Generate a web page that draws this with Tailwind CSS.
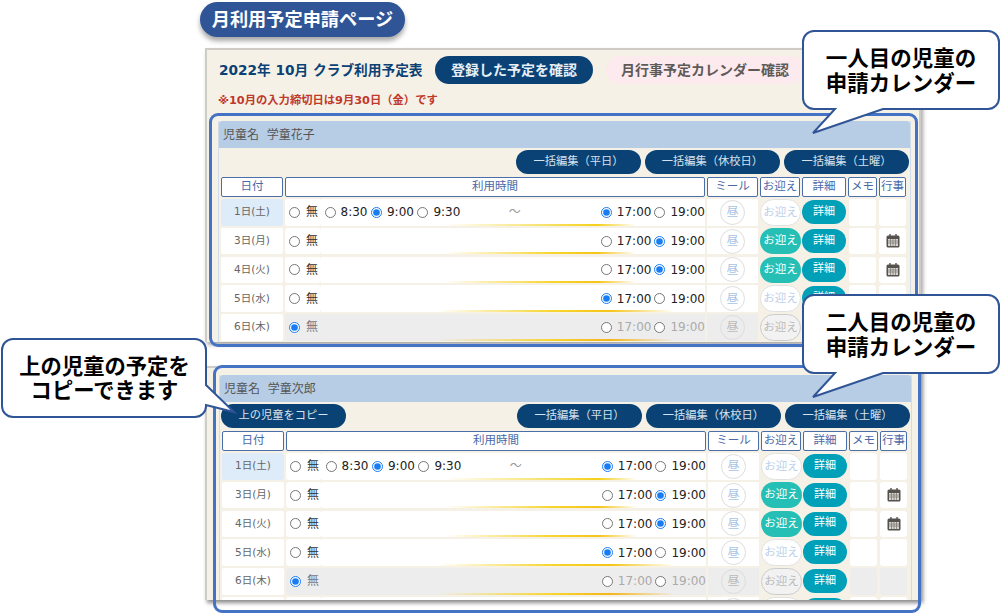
<!DOCTYPE html>
<html lang="ja">
<head>
  <meta charset="UTF-8" />
  <meta name="viewport" content="width=device-width, initial-scale=1.0" />
  <title>月利用予定申請ページ</title>
  <script src="https://cdn.jsdelivr.net/npm/@tailwindcss/browser@4"></script>
</head>

<body class="bg-white">
  <div class="relative w-[1000px] h-[614px] overflow-hidden bg-white pl-[205px] pt-[2px] font-['DejaVu_Sans','Noto_Sans_CJK_JP',sans-serif] text-[#333]">

    <!-- Page title -->
    <h1 class="-ml-[5px] w-[205px] h-[35px] rounded-full bg-[#2f5597] shadow-[0_4px_5px_rgba(0,0,0,0.35)] flex items-center justify-center text-[18.2px] font-bold text-white">月利用予定申請ページ</h1>

    <!-- First screen -->
    <section class="mt-[11px] w-[716px] h-[294px] overflow-hidden border-x-2 border-t-2 border-[#cfccc6] bg-[#f6f1e6] shadow-[2px_3px_4px_rgba(0,0,0,0.35)]">
      <div class="flex items-center h-[28px] mt-[6px] pl-[12px]">
        <h2 class="w-[216px] text-[13.7px] font-bold text-[#0a4275] whitespace-nowrap">2022年 10月 クラブ利用予定表</h2>
        <button class="w-[158px] h-[28px] rounded-full bg-[#0a4275] text-[14px] font-bold text-[#e6eef6]">登録した予定を確認</button>
        <button class="ml-[13px] w-[198px] h-[28px] rounded-full bg-[#fdeaee] text-[14px] font-bold text-[#5f5a58]">月行事予定カレンダー確認</button>
      </div>
      <p class="mt-[9px] pl-[11px] h-[15px] leading-[15px] text-[11.3px] font-bold text-[#c0392b] whitespace-nowrap">※10月の入力締切日は9月30日（金）です</p>
      <div class="mt-[13px] ml-[11px]" data-panel="学童花子" data-rows="5"></div>
    </section>

    <!-- Second screen -->
    <section class="mt-[24px] w-[716px] h-[234px] overflow-hidden border-x-2 border-t-2 border-[#cfccc6] bg-[#f6f1e6] shadow-[2px_3px_4px_rgba(0,0,0,0.45)]">
      <div class="mt-[7px] ml-[12px]" data-panel="学童次郎" data-rows="6" data-copy="1"></div>
    </section>

    <!-- Annotation outlines -->
    <div class="absolute left-[209px] top-[113px] w-[709px] h-[234px] rounded-[9px] border-[3px] border-[#4472c4] pointer-events-none"></div>
    <div class="absolute left-[213px] top-[365px] w-[708px] h-[248px] rounded-[9px] border-[3px] border-[#4472c4] pointer-events-none"></div>

    <!-- Callouts -->
    <div class="absolute left-[802px] top-[30px] w-[198px] h-[80px] pt-[2px] flex items-center justify-center text-center">
      <svg class="absolute inset-0 overflow-visible" width="198" height="80" fill="#fff" stroke="#2f5597" stroke-width="2">
        <path d="M12 1H186a11 11 0 0 1 11 11V68a11 11 0 0 1-11 11H81L11 103L33 79H12a11 11 0 0 1-11-11V12a11 11 0 0 1 11-11z" />
      </svg>
      <p class="relative text-[21.5px] leading-[25px] font-bold text-black">一人目の児童の<br />申請カレンダー</p>
    </div>
    <div class="absolute left-[802px] top-[294px] w-[198px] h-[80px] pt-[2px] flex items-center justify-center text-center">
      <svg class="absolute inset-0 overflow-visible" width="198" height="80" fill="#fff" stroke="#2f5597" stroke-width="2">
        <path d="M12 1H186a11 11 0 0 1 11 11V68a11 11 0 0 1-11 11H81L11 103L33 79H12a11 11 0 0 1-11-11V12a11 11 0 0 1 11-11z" />
      </svg>
      <p class="relative text-[21.5px] leading-[25px] font-bold text-black">二人目の児童の<br />申請カレンダー</p>
    </div>
    <div class="absolute left-[1px] top-[338px] w-[207px] h-[81px] flex items-center justify-center text-center">
      <svg class="absolute inset-0 overflow-visible" width="207" height="81" fill="#fff" stroke="#2f5597" stroke-width="2">
        <path d="M12 1H194a11 11 0 0 1 11 11V47L233 74L205 67V68a11 11 0 0 1-11 11H12a11 11 0 0 1-11-11V12a11 11 0 0 1 11-11z" />
      </svg>
      <p class="relative text-[21.3px] leading-[24px] font-bold text-black">上の児童の予定を<br />コピーできます</p>
    </div>
  </div>

  <script>
    const gridCols = "grid grid-cols-[64px_36px_386px_53px_42px_46px_31px_29px]";

    const days = [
      { label: "1日(土)", start: "9:00", end: "17:00", today: true },
      { label: "3日(月)", end: "19:00", pickup: true, event: true, glow: "bg-[linear-gradient(90deg,transparent_32%,#f7d530_60%,#f5c518_72%,transparent_82%)]" },
      { label: "4日(火)", end: "19:00", pickup: true, event: true, glow: "bg-[linear-gradient(90deg,transparent_32%,#f7d530_60%,#f5c518_72%,transparent_82%)]" },
      { label: "5日(水)", end: "17:00", glow: "bg-[linear-gradient(90deg,transparent_30%,#f7d530_60%,#f5c518_75%,transparent_92%)]" },
      { label: "6日(木)", off: true, glow: "bg-[linear-gradient(90deg,transparent_30%,#f7d530_60%,#f5b518_75%,transparent_92%)]" },
      { label: "7日(金)", end: "17:00" },
    ];

    const calendarIcon = `
      <svg width="14" height="14" viewBox="0 0 14 14">
        <rect x="0.5" y="1.5" width="13" height="12" rx="1.5" fill="#55524e" />
        <rect x="2" y="5" width="10" height="7" fill="#d8d5cf" />
        <path d="M2 7h10M2 9h10M4.5 5v7M7 5v7M9.5 5v7" stroke="#77736d" stroke-width="0.7" />
        <path d="M4 0v3M10 0v3" stroke="#55524e" stroke-width="1.4" />
      </svg>`;

    function radio(name, checked) {
      return `<input type="radio" name="${name}" ${checked ? "checked" : ""} class="w-[11px] h-[11px] m-0 shrink-0 accent-[#1a7cf2]" />`;
    }

    function timeOption(name, value, current) {
      return `<label class="flex items-center gap-[5px]">${radio(name, value === current)}<span>${value}</span></label>`;
    }

    function row(panel, day, i) {
      const name = `${panel}-${i}`;
      const cell = day.off ? "bg-[#ededed]" : "bg-white";
      const startTimes = day.start
        ? `<div class="flex items-center gap-[3.5px]">${["8:30", "9:00", "9:30"].map(t => timeOption(name + "-s", t, day.start)).join("")}<span class="ml-[45px] text-[#999]">～</span></div>`
        : "<div></div>";
      return `
        <div class="${gridCols} h-[28.75px] text-[11px]">
          <div class="mr-[2px] h-[26.5px] rounded-[2px] flex items-center justify-center text-[10.5px] text-[#666] ${day.today ? "bg-[#deecf9]" : "bg-white"}">${day.label}</div>
          <label class="h-[26.5px] rounded-[3px] flex items-center pl-[4px] gap-[6px] text-[12px] ${cell} ${day.off ? "text-[#778]" : ""}">${radio(name + "-n", day.off)}<span>無</span></label>
          <div class="mr-[2px] h-[26.5px] flex items-center justify-between pl-[3.5px] text-[12px] ${day.off ? "text-[#aaa]" : "text-[#222]"} ${cell} ${day.glow || "bg-[linear-gradient(90deg,transparent_32%,#f7e060_60%,#f5d018_72%,transparent_82%)]"} bg-no-repeat bg-bottom bg-[length:100%_2px]">
            ${startTimes}
            <div class="flex items-center gap-[3px]">${["17:00", "19:00"].map(t => timeOption(name + "-e", t, day.end)).join("")}</div>
          </div>
          <div class="mr-[2px] h-[26.5px] flex items-center justify-center ${cell}">
            <span class="w-[25px] h-[25px] rounded-full border border-[#ddd] flex items-center justify-center text-[12px] ${day.off ? "text-[#bbb]" : "text-[#a9c4e4]"}">昼</span>
          </div>
          <div class="mr-[1px] h-[26.5px] rounded-full flex items-center justify-center text-[11.5px] ${day.pickup ? "bg-[#26bfb5] text-white" : day.off ? "border border-[#ccc] bg-[#f2f2f2] text-[#bbb]" : "border border-[#e2e2e2] bg-white text-[#bcd0ea]"}">お迎え</div>
          <div class="mr-[2px] h-[24px] mt-[1px] rounded-full bg-[#00a0b9] flex items-center justify-center text-[11px] text-white">詳細</div>
          <div class="ml-[1px] mr-[3px] h-[26.5px] rounded-[3px] ${cell}"></div>
          <div class="mr-[2px] h-[26.5px] rounded-[3px] flex items-center justify-center ${cell}">${day.event ? calendarIcon : ""}</div>
        </div>`;
    }

    function panelHtml(child, copy, rows) {
      const head = "h-[20px] mr-[2px] bg-white border border-[#4a6ea8] rounded-[2px] flex items-center justify-center text-[11.5px] text-[#4a69a8]";
      const pill = "h-[24px] rounded-full bg-[#0a4275] flex items-center justify-center text-[11.25px] text-[#d7e3ee]";
      return `
        <div class="w-[693px] border-x border-[#cfdcea]">
          <div class="h-[27px] rounded-t-[3px] bg-[#b7cde5] flex items-center pl-[4px] text-[12px] text-[#555]">児童名&nbsp;&nbsp;${child}</div>
          <div class="flex items-center mt-[2px] h-[24px] pr-[1px]">
            ${copy ? `<button class="${pill} w-[125px] ml-[1px]">上の児童をコピー</button>` : ""}
            <div class="ml-auto flex gap-[4px]">
              <button class="${pill} w-[125px]">一括編集（平日）</button>
              <button class="${pill} w-[135px]">一括編集（休校日）</button>
              <button class="${pill} w-[125px]">一括編集（土曜）</button>
            </div>
          </div>
          <div class="ml-[2px] mt-[3px]">
            <div class="${gridCols} h-[22px]">
              <div class="${head}">日付</div>
              <div class="${head} col-span-2">利用時間</div>
              <div class="${head}">ミール</div>
              <div class="${head} mr-[1px]">お迎え</div>
              <div class="${head}">詳細</div>
              <div class="${head}">メモ</div>
              <div class="${head} mr-[1px]">行事</div>
            </div>
            ${days.slice(0, rows).map((d, i) => row(child, d, i)).join("")}
          </div>
        </div>`;
    }

    document.querySelectorAll("[data-panel]").forEach(el => {
      el.innerHTML = panelHtml(el.dataset.panel, el.dataset.copy, Number(el.dataset.rows));
    });
  </script>
</body>
</html>
